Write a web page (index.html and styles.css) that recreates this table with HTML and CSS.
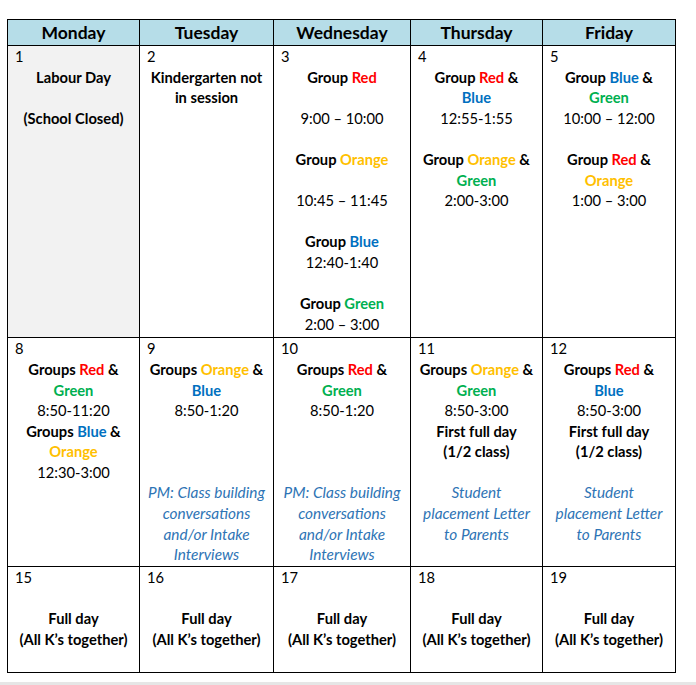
FILE: index.html
```html
<!DOCTYPE html>
<html>
<head>
<meta charset="utf-8">
<link rel="stylesheet" href="styles.css">
</head>
<body>
<div class="page">
<table class="cal">
  <colgroup>
    <col class="c1"><col class="c2"><col class="c3"><col class="c4"><col class="c5">
  </colgroup>
  <thead>
    <tr><th>Monday</th><th>Tuesday</th><th>Wednesday</th><th>Thursday</th><th>Friday</th></tr>
  </thead>
  <tbody>
    <tr class="r1">
      <td class="closed">
        <div class="num">1</div>
        <p class="b">Labour Day</p>
        <p class="blank"></p>
        <p class="b">(School Closed)</p>
      </td>
      <td>
        <div class="num">2</div>
        <p class="b">Kindergarten not<br>in session</p>
      </td>
      <td>
        <div class="num">3</div>
        <p class="b">Group <span class="red">Red</span></p>
        <p class="blank"></p>
        <p>9:00 – 10:00</p>
        <p class="blank"></p>
        <p class="b">Group <span class="orange">Orange</span></p>
        <p class="blank"></p>
        <p>10:45 – 11:45</p>
        <p class="blank"></p>
        <p class="b">Group <span class="blue">Blue</span></p>
        <p>12:40-1:40</p>
        <p class="blank"></p>
        <p class="b">Group <span class="green">Green</span></p>
        <p>2:00 – 3:00</p>
      </td>
      <td>
        <div class="num">4</div>
        <p class="b">Group <span class="red">Red</span> &amp;</p>
        <p class="b"><span class="blue">Blue</span></p>
        <p>12:55-1:55</p>
        <p class="blank"></p>
        <p class="b">Group <span class="orange">Orange</span> &amp;</p>
        <p class="b"><span class="green">Green</span></p>
        <p>2:00-3:00</p>
      </td>
      <td>
        <div class="num">5</div>
        <p class="b">Group <span class="blue">Blue</span> &amp;</p>
        <p class="b"><span class="green">Green</span></p>
        <p>10:00 – 12:00</p>
        <p class="blank"></p>
        <p class="b">Group <span class="red">Red</span> &amp;</p>
        <p class="b"><span class="orange">Orange</span></p>
        <p>1:00 – 3:00</p>
      </td>
    </tr>
    <tr class="r2">
      <td>
        <div class="num">8</div>
        <p class="b">Groups <span class="red">Red</span> &amp;</p>
        <p class="b"><span class="green">Green</span></p>
        <p>8:50-11:20</p>
        <p class="b">Groups <span class="blue">Blue</span> &amp;</p>
        <p class="b"><span class="orange">Orange</span></p>
        <p>12:30-3:00</p>
      </td>
      <td>
        <div class="num">9</div>
        <p class="b">Groups <span class="orange">Orange</span> &amp;</p>
        <p class="b"><span class="blue">Blue</span></p>
        <p>8:50-1:20</p>
        <p class="blank"></p>
        <p class="blank"></p>
        <p class="blank"></p>
        <p class="note">PM: Class building<br>conversations<br>and/or Intake<br>Interviews</p>
      </td>
      <td>
        <div class="num">10</div>
        <p class="b">Groups <span class="red">Red</span> &amp;</p>
        <p class="b"><span class="green">Green</span></p>
        <p>8:50-1:20</p>
        <p class="blank"></p>
        <p class="blank"></p>
        <p class="blank"></p>
        <p class="note">PM: Class building<br>conversations<br>and/or Intake<br>Interviews</p>
      </td>
      <td>
        <div class="num">11</div>
        <p class="b">Groups <span class="orange">Orange</span> &amp;</p>
        <p class="b"><span class="green">Green</span></p>
        <p>8:50-3:00</p>
        <p class="b">First full day</p>
        <p class="b">(1/2 class)</p>
        <p class="blank"></p>
        <p class="note">Student<br>placement Letter<br>to Parents</p>
      </td>
      <td>
        <div class="num">12</div>
        <p class="b">Groups <span class="red">Red</span> &amp;</p>
        <p class="b"><span class="blue">Blue</span></p>
        <p>8:50-3:00</p>
        <p class="b">First full day</p>
        <p class="b">(1/2 class)</p>
        <p class="blank"></p>
        <p class="note">Student<br>placement Letter<br>to Parents</p>
      </td>
    </tr>
    <tr class="r3">
      <td>
        <div class="num">15</div>
        <p class="blank"></p>
        <p class="b">Full day</p>
        <p class="b">(All K’s together)</p>
        <p class="blank"></p>
      </td>
      <td>
        <div class="num">16</div>
        <p class="blank"></p>
        <p class="b">Full day</p>
        <p class="b">(All K’s together)</p>
        <p class="blank"></p>
      </td>
      <td>
        <div class="num">17</div>
        <p class="blank"></p>
        <p class="b">Full day</p>
        <p class="b">(All K’s together)</p>
        <p class="blank"></p>
      </td>
      <td>
        <div class="num">18</div>
        <p class="blank"></p>
        <p class="b">Full day</p>
        <p class="b">(All K’s together)</p>
        <p class="blank"></p>
      </td>
      <td>
        <div class="num">19</div>
        <p class="blank"></p>
        <p class="b">Full day</p>
        <p class="b">(All K’s together)</p>
        <p class="blank"></p>
      </td>
    </tr>
  </tbody>
</table>
<div class="strip"></div>
</div>
</body>
</html>
```

FILE: styles.css
```css
html, body {
  margin: 0;
  padding: 0;
  background: #ffffff;
}

.page {
  padding: 19px 0 0 7px;
  width: 696px;
  height: 685px;
  box-sizing: border-box;
  display: flex;
  flex-direction: column;
  font-family: Lato, "Open Sans", sans-serif;
  color: #000;
}

.cal {
  border-collapse: collapse;
  table-layout: fixed;
  width: 668px;
}

.c1 { width: 132px; }
.c2 { width: 134px; }
.c3 { width: 137px; }
.c4 { width: 132px; }
.c5 { width: 133px; }

.cal th,
.cal td {
  border: 1px solid #000;
  padding: 0 7px;
}

.cal th {
  background: #b6dde8;
  height: 25px;
  font-size: 17.5px;
  font-weight: 700;
  text-align: center;
  line-height: 24px;
  padding-bottom: 0;
}

.cal td {
  vertical-align: top;
  text-align: center;
  font-size: 14.7px;
  line-height: 20.6px;
  padding-bottom: 1px;
}

.cal .r1 td {
  padding-bottom: 3px;
}

.cal .r3 td {
  padding-bottom: 2px;
}

.cal td.closed {
  background: #f2f2f2;
}

.num {
  text-align: left;
}

.cal p {
  margin: 0;
  white-space: nowrap;
}

.cal p.blank {
  height: 20.6px;
}

.b { font-weight: 700; }

.red { color: #ff0000; }
.orange { color: #ffc000; }
.blue { color: #0070c0; }
.green { color: #00b050; }

.note {
  font-style: italic;
  font-size: 15.4px;
  color: #2e74b5;
}

.strip {
  margin-top: auto;
  margin-left: -7px;
  height: 3px;
  background: #e6e6e6;
}
```
